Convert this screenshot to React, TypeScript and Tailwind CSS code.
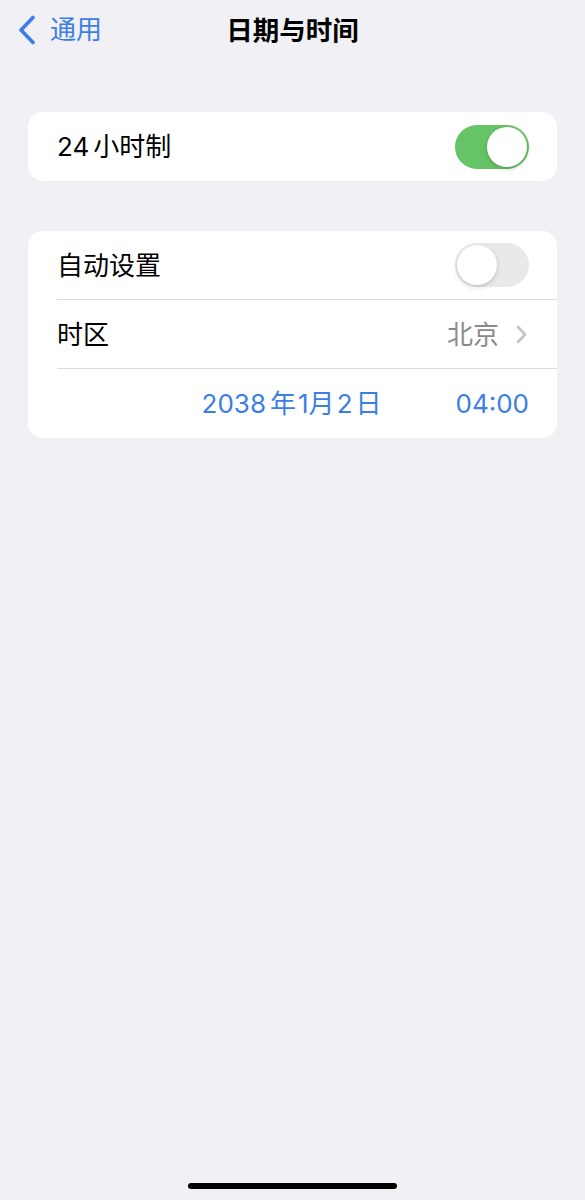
import React from 'react';

const font = { fontFamily: 'Inter, "Noto Sans CJK SC", sans-serif' };

const Toggle = ({ on }: { on: boolean }) => (
  <div
    className={`relative w-[74px] h-[44px] rounded-full ${on ? 'bg-[#65c466]' : 'bg-[#e9e9ea]'}`}
  >
    <div
      className={`absolute top-[2px] w-[40px] h-[40px] rounded-full bg-white shadow-[0_2px_5px_rgba(0,0,0,0.18)] ${
        on ? 'right-[2px]' : 'left-[2px]'
      }`}
    />
  </div>
);

export default function App() {
  return (
    <div className="w-[585px] h-[1200px] bg-[#f0f0f5] flex flex-col" style={font}>
      {/* Nav bar */}
      <div className="relative h-[60px] flex items-center">
        <div className="flex items-center pl-[17px] gap-[13px] text-[#3b7ee6]">
          <svg width="20" height="30" viewBox="0 0 20 30" fill="none">
            <path
              d="M16 2.5 L4 15 L16 27.5"
              stroke="currentColor"
              strokeWidth="3.6"
              strokeLinecap="round"
              strokeLinejoin="round"
            />
          </svg>
          <span className="text-[26px] leading-none">通用</span>
        </div>
        <div className="absolute inset-0 flex items-center justify-center pointer-events-none">
          <span className="text-[26.5px] font-semibold text-black leading-none">日期与时间</span>
        </div>
      </div>

      {/* Card 1 */}
      <div className="mt-[52px] mx-[28px] bg-white rounded-[15px]">
        <div className="h-[69px] flex items-center justify-between pl-[29px] pr-[28px]">
          <span className="text-[26px] text-black">
            24<span className="ml-[4px]">小时制</span>
          </span>
          <Toggle on />
        </div>
      </div>

      {/* Card 2 */}
      <div className="mt-[50px] mx-[28px] bg-white rounded-[15px]">
        <div className="h-[68px] flex items-center justify-between pl-[29px] pr-[28px]">
          <span className="text-[26px] text-black">自动设置</span>
          <Toggle on={false} />
        </div>
        <div className="ml-[29px] h-px bg-[#dcdce0]" />
        <div className="h-[68px] flex items-center justify-between pl-[29px] pr-[30px]">
          <span className="text-[26px] text-black">时区</span>
          <div className="flex items-center gap-[17px]">
            <span className="text-[26px] text-[#8a8a8e]">北京</span>
            <svg width="11" height="19" viewBox="0 0 11 19" fill="none">
              <path
                d="M2 2 L9 9.5 L2 17"
                stroke="#c4c4c7"
                strokeWidth="2.6"
                strokeLinecap="round"
                strokeLinejoin="round"
              />
            </svg>
          </div>
        </div>
        <div className="ml-[29px] h-px bg-[#dcdce0]" />
        <div className="h-[69px] flex items-center justify-end pr-[28px] text-[#3b7ee6] text-[26px]">
          <span>
            2038<span className="ml-[4px]">年</span>
            <span className="ml-[2px]">1</span>月<span className="ml-[2px]">2</span>
            <span className="ml-[3px]">日</span>
          </span>
          <span className="ml-[74px]">04:00</span>
        </div>
      </div>

      <div className="flex-1" />
      {/* Home indicator */}
      <div className="flex justify-center pb-[11px]">
        <div className="w-[209px] h-[6px] rounded-full bg-black" />
      </div>
    </div>
  );
}
